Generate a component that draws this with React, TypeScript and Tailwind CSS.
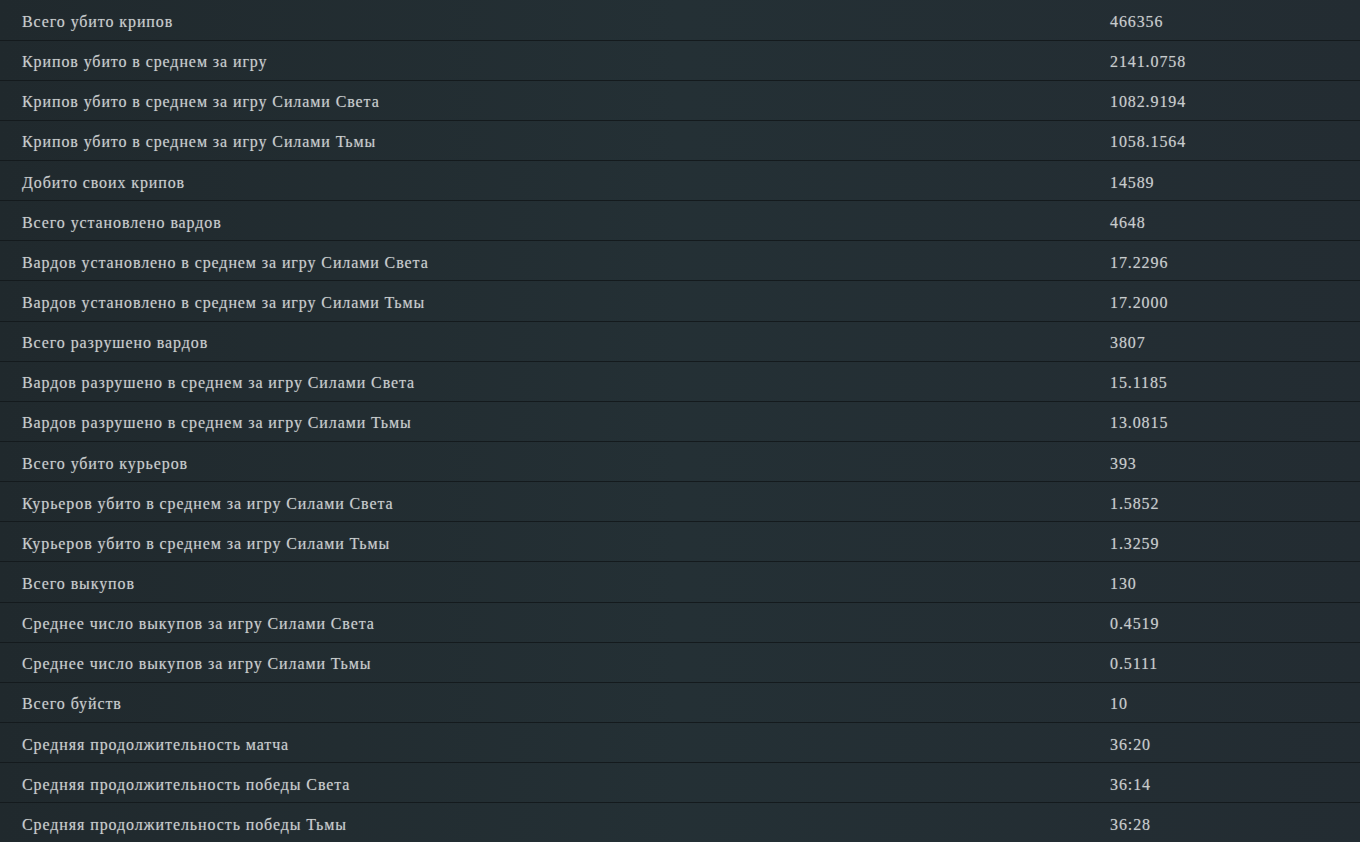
const rows: [string, string][] = [
  ["Всего убито крипов", "466356"],
  ["Крипов убито в среднем за игру", "2141.0758"],
  ["Крипов убито в среднем за игру Силами Света", "1082.9194"],
  ["Крипов убито в среднем за игру Силами Тьмы", "1058.1564"],
  ["Добито своих крипов", "14589"],
  ["Всего установлено вардов", "4648"],
  ["Вардов установлено в среднем за игру Силами Света", "17.2296"],
  ["Вардов установлено в среднем за игру Силами Тьмы", "17.2000"],
  ["Всего разрушено вардов", "3807"],
  ["Вардов разрушено в среднем за игру Силами Света", "15.1185"],
  ["Вардов разрушено в среднем за игру Силами Тьмы", "13.0815"],
  ["Всего убито курьеров", "393"],
  ["Курьеров убито в среднем за игру Силами Света", "1.5852"],
  ["Курьеров убито в среднем за игру Силами Тьмы", "1.3259"],
  ["Всего выкупов", "130"],
  ["Среднее число выкупов за игру Силами Света", "0.4519"],
  ["Среднее число выкупов за игру Силами Тьмы", "0.5111"],
  ["Всего буйств", "10"],
  ["Средняя продолжительность матча", "36:20"],
  ["Средняя продолжительность победы Света", "36:14"],
  ["Средняя продолжительность победы Тьмы", "36:28"],
];

export default function App() {
  return (
    <div className="min-h-screen bg-[#222b30] font-['Liberation_Serif',serif] text-[16px] tracking-[0.9px] text-[#c8cccd] [text-shadow:0_0_1px_rgba(200,204,205,0.45)]">
      <table className="w-full border-collapse">
        <tbody>
          {rows.map(([label, value]) => (
            <tr key={label} className="h-[40.15px] border-b border-[#141a1d] bg-gradient-to-r from-[#20292d] via-[#243035] to-[#232c32]">
              <td className="w-[80%] pl-[22px] pt-[4px] align-middle">{label}</td>
              <td className="pl-[22px] pt-[4px] align-middle">{value}</td>
            </tr>
          ))}
        </tbody>
      </table>
    </div>
  );
}
